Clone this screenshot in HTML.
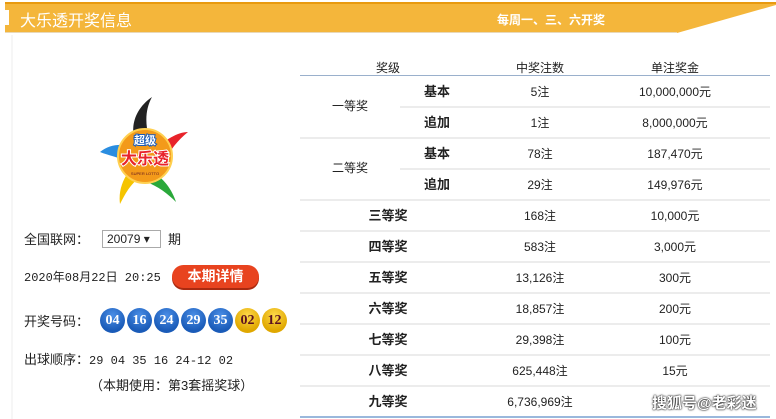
<!DOCTYPE html>
<html><head><meta charset="utf-8"><style>
*{margin:0;padding:0;box-sizing:border-box}
body{width:776px;height:419px;background:#fff;font-family:"Liberation Sans","Noto Sans CJK SC",sans-serif;position:relative;overflow:hidden;color:#222}
.a{position:absolute;white-space:nowrap}
.hd{position:absolute;left:5px;top:2px;width:771px;height:31px}
.ball{position:absolute;top:308px;width:25px;height:25px;border-radius:50%;color:#fff;font:bold 14px "Liberation Serif",serif;text-align:center;line-height:25px}
.b{background:radial-gradient(circle at 50% 30%,#4a8ee6,#1a5bb8 70%)}
.y{background:radial-gradient(circle at 50% 30%,#ffd84a,#e0a800 70%);color:#5a1020}
.t{position:absolute;font-size:12px;text-align:center;white-space:nowrap}
.ln{position:absolute;height:2px;background:#ececec}
.bd{font-weight:bold;font-size:13px}
</style></head><body>
<svg class="hd" width="771" height="31"><polygon points="0,0 771,0 771,3 672,31 0,31" fill="#f4b63b"/><rect x="0" y="0" width="771" height="2" fill="#e89a10"/><rect x="0" y="30" width="672" height="1" fill="#e8d8b8"/><rect x="0" y="8" width="4" height="15" fill="#fff"/></svg>
<div class="a" style="left:20px;top:7px;font-size:16px;color:#fff">大乐透开奖信息</div>
<div class="a" style="left:497px;top:11px;font-size:12px;color:#fff;font-weight:bold">每周一、三、六开奖</div>
<div style="position:absolute;left:11px;top:35px;width:2px;height:384px;background:#f6f6f6"></div>
<!-- logo -->
<svg style="position:absolute;left:98px;top:94px" width="90" height="112" viewBox="0 0 90 112">
<path d="M54,3 C38,14 33,30 36,44 L50,40 C47,26 48,14 54,3Z" fill="#222"/>
<path d="M2,58 C14,48 30,50 40,55 L36,70 C24,64 12,62 2,58Z" fill="#2a8de0"/>
<path d="M90,38 C80,38 66,46 58,56 L66,68 C72,56 80,46 90,38Z" fill="#e8232a"/>
<path d="M22,110 C20,96 26,82 34,74 L44,82 C34,88 28,98 22,110Z" fill="#f5c400"/>
<path d="M78,108 C74,96 66,84 54,78 L48,88 C60,92 70,100 78,108Z" fill="#2aa83a"/>
<circle cx="47" cy="62" r="27" fill="#f39a1a"/>
<circle cx="47" cy="62" r="27" fill="none" stroke="#ffd050" stroke-width="2"/>
<text x="47" y="50" font-size="11" font-weight="bold" fill="#fff" text-anchor="middle" font-family="Noto Sans CJK SC" stroke="#1a5bb8" stroke-width="2" paint-order="stroke">超级</text>
<text x="47" y="70" font-size="16" font-weight="bold" fill="#e8232a" text-anchor="middle" font-family="Noto Sans CJK SC" stroke="#fff" stroke-width="2" paint-order="stroke">大乐透</text>
<text x="47" y="81" font-size="4" fill="#5a1020" text-anchor="middle">SUPER LOTTO</text>
</svg>
<div class="a" style="left:24px;top:229px;font-size:13px">全国联网：</div>
<div class="a" style="left:102px;top:230px;width:59px;height:18px;border:1px solid #aaa;font-size:12px;line-height:16px;padding-left:4px">20079 ▾</div>
<div class="a" style="left:168px;top:229px;font-size:13px">期</div>
<div class="a" style="left:24px;top:268px;font-size:12px;font-family:'Liberation Mono','Noto Sans CJK SC',monospace">2020年08月22日 20:25</div>
<div class="a" style="left:172px;top:265px;width:87px;height:23px;border-radius:12px;background:#e8431f;color:#fff;font-weight:bold;font-size:14px;text-align:center;line-height:22px;box-shadow:0 2px 0 #a92a10">本期详情</div>
<div class="a" style="left:24px;top:311px;font-size:13px">开奖号码：</div>
<div class="ball b" style="left:100px">04</div>
<div class="ball b" style="left:127px">16</div>
<div class="ball b" style="left:154px">24</div>
<div class="ball b" style="left:181px">29</div>
<div class="ball b" style="left:208px">35</div>
<div class="ball y" style="left:235px">02</div>
<div class="ball y" style="left:262px">12</div>
<div class="a" style="left:24px;top:349px;font-size:13px">出球顺序：<span style="font-family:'Liberation Mono',monospace;font-size:12px">29 04 35 16 24-12 02</span></div>
<div class="a" style="left:90px;top:375px;font-size:13px">（本期使用：第3套摇奖球）</div>
<!-- table -->
<div class="t" style="left:348px;top:59px;width:80px">奖级</div>
<div class="t" style="left:500px;top:59px;width:80px">中奖注数</div>
<div class="t" style="left:635px;top:59px;width:80px">单注奖金</div>
<div style="position:absolute;left:300px;top:75px;width:470px;height:1px;background:#9ab0cc"></div>
<div style="position:absolute;left:300px;top:416px;width:470px;height:2px;background:#9ab8dc"></div>
<div class="ln" style="left:400px;top:106px;width:370px"></div>
<div class="ln" style="left:300px;top:137px;width:470px"></div>
<div class="ln" style="left:400px;top:168px;width:370px"></div>
<div class="ln" style="left:300px;top:199px;width:470px"></div>
<div class="ln" style="left:300px;top:230px;width:470px"></div>
<div class="ln" style="left:300px;top:261px;width:470px"></div>
<div class="ln" style="left:300px;top:292px;width:470px"></div>
<div class="ln" style="left:300px;top:323px;width:470px"></div>
<div class="ln" style="left:300px;top:354px;width:470px"></div>
<div class="ln" style="left:300px;top:385px;width:470px"></div>
<div class="t" style="left:310px;top:97px;width:80px">一等奖</div>
<div class="t" style="left:310px;top:159px;width:80px">二等奖</div>
<div class="t bd" style="left:407px;top:81px;width:60px">基本</div>
<div class="t bd" style="left:407px;top:112px;width:60px">追加</div>
<div class="t bd" style="left:407px;top:143px;width:60px">基本</div>
<div class="t bd" style="left:407px;top:174px;width:60px">追加</div>
<div class="t bd" style="left:348px;top:205px;width:80px">三等奖</div>
<div class="t bd" style="left:348px;top:236px;width:80px">四等奖</div>
<div class="t bd" style="left:348px;top:267px;width:80px">五等奖</div>
<div class="t bd" style="left:348px;top:298px;width:80px">六等奖</div>
<div class="t bd" style="left:348px;top:329px;width:80px">七等奖</div>
<div class="t bd" style="left:348px;top:360px;width:80px">八等奖</div>
<div class="t bd" style="left:348px;top:391px;width:80px">九等奖</div>
<div class="t" style="left:480px;top:83px;width:120px">5注</div>
<div class="t" style="left:480px;top:114px;width:120px">1注</div>
<div class="t" style="left:480px;top:145px;width:120px">78注</div>
<div class="t" style="left:480px;top:176px;width:120px">29注</div>
<div class="t" style="left:480px;top:207px;width:120px">168注</div>
<div class="t" style="left:480px;top:238px;width:120px">583注</div>
<div class="t" style="left:480px;top:269px;width:120px">13,126注</div>
<div class="t" style="left:480px;top:300px;width:120px">18,857注</div>
<div class="t" style="left:480px;top:331px;width:120px">29,398注</div>
<div class="t" style="left:480px;top:362px;width:120px">625,448注</div>
<div class="t" style="left:480px;top:393px;width:120px">6,736,969注</div>
<div class="t" style="left:615px;top:83px;width:120px">10,000,000元</div>
<div class="t" style="left:615px;top:114px;width:120px">8,000,000元</div>
<div class="t" style="left:615px;top:145px;width:120px">187,470元</div>
<div class="t" style="left:615px;top:176px;width:120px">149,976元</div>
<div class="t" style="left:615px;top:207px;width:120px">10,000元</div>
<div class="t" style="left:615px;top:238px;width:120px">3,000元</div>
<div class="t" style="left:615px;top:269px;width:120px">300元</div>
<div class="t" style="left:615px;top:300px;width:120px">200元</div>
<div class="t" style="left:615px;top:331px;width:120px">100元</div>
<div class="t" style="left:615px;top:362px;width:120px">15元</div>
<div class="a" style="left:652px;top:392px;font-size:15px;font-weight:bold;color:#fff;text-shadow:0 0 2px #000,0 0 1px #000">搜狐号@老彩迷</div>
</body></html>
